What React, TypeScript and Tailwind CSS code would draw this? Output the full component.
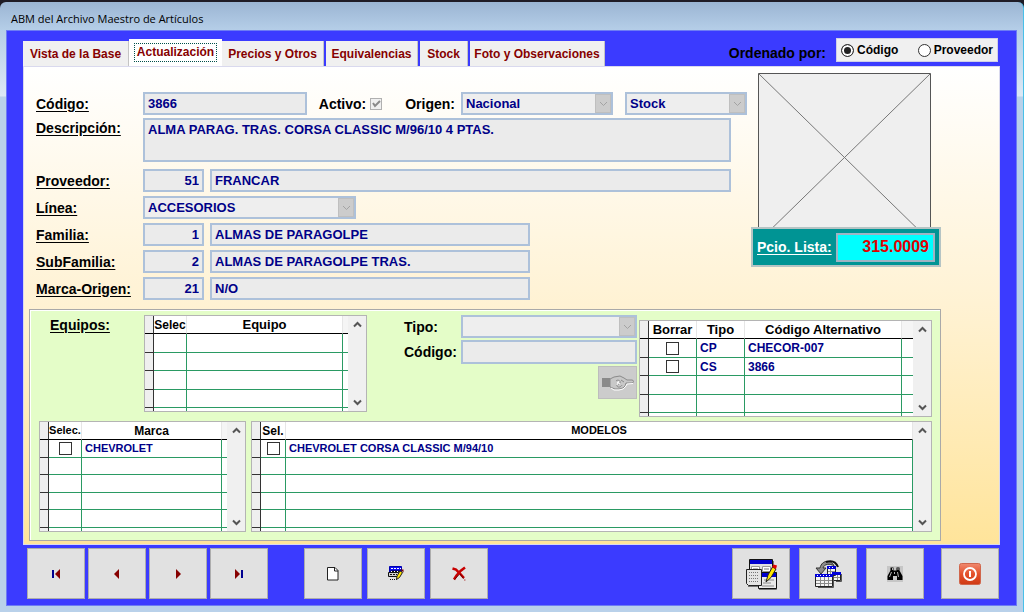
import { useState } from "react";
import type { ReactNode } from "react";

const field =
  "border-2 border-[#adc1da] bg-[#ebebeb] px-[3px] text-[13px] leading-4 font-bold text-[#000088] outline-none";

const tabs = [
  { name: "Vista de la Base", width: "w-[106px]" },
  { name: "Actualización", width: "w-[93px]" },
  { name: "Precios y Otros", width: "w-[102px] mr-[2px]" },
  { name: "Equivalencias", width: "w-[92px] mr-[2px]" },
  { name: "Stock", width: "w-[48px] mr-[2px]" },
  { name: "Foto y Observaciones", width: "w-[135px]" },
];

function Label({ htmlFor, children }: { htmlFor: string; children: ReactNode }) {
  return (
    <label
      htmlFor={htmlFor}
      className="w-[107px] shrink-0 text-sm font-bold underline underline-offset-2"
    >
      {children}
    </label>
  );
}

function Combo({ id, label, value, className }: { id: string; label?: string; value: string; className: string }) {
  return (
    <div className={`flex h-[23px] border-2 border-[#adc1da] bg-[#eeeeee] ${className}`}>
      <select
        id={id}
        aria-label={label}
        disabled
        className="min-w-0 flex-1 appearance-none bg-transparent px-[3px] text-[13px] leading-4 font-bold text-[#000088] opacity-100"
      >
        <option>{value}</option>
      </select>
      <span className="flex w-4 items-center justify-center border border-[#bfbfbf] bg-[#cccccc]">
        <svg width="9" height="6" viewBox="0 0 9 6" fill="none" stroke="#a3a3a3">
          <path d="M1 1l3.5 3.5L8 1" />
        </svg>
      </span>
    </div>
  );
}

function CodeRow({ id, label, code, name, wide }: { id: string; label: string; code: string; name: string; wide?: boolean }) {
  return (
    <div className="flex items-center">
      <Label htmlFor={id}>{label}</Label>
      <input id={id} readOnly defaultValue={code} className={`${field} h-[23px] w-[61px] text-right`} />
      <input
        aria-label={`${label} nombre`}
        readOnly
        defaultValue={name}
        className={`${field} ml-[6px] h-[23px] ${wide ? "mr-4 min-w-0 flex-1" : "w-[320px]"}`}
      />
    </div>
  );
}

type Column = { title: string; width?: string; check?: boolean; head?: string };

function Grid({
  columns,
  rows,
  lines,
  tail,
  small,
  className,
}: {
  columns: Column[];
  rows: string[][];
  lines: number;
  tail?: string;
  small?: boolean;
  className: string;
}) {
  const rowHeight = small ? "h-[18px] even:h-[17px]" : "h-[19px] even:h-[18px]";
  const headText = small ? "text-xs" : "text-[13px]";
  const dataText = small ? "text-[11px]" : "text-xs";
  const blank = Array.from({ length: lines });

  return (
    <div className={`flex items-stretch overflow-hidden border border-[#b4b4b4] bg-white ${className}`}>
      <table className="w-full min-w-0 flex-1 table-fixed border-separate border-spacing-0 leading-none">
        <colgroup>
          <col className="w-[9px]" />
          {columns.map((c) => (
            <col key={c.title} className={c.width} />
          ))}
          {tail && <col className={tail} />}
        </colgroup>
        <thead>
          <tr className="h-[18px]">
            <td className="border-r border-b border-r-[#333] border-b-black bg-[#efefef] p-0" />
            {columns.map((c) => (
              <th
                key={c.title}
                className={`border-r border-b border-r-[#e6e6e6] border-b-black p-0 text-center font-bold whitespace-nowrap ${c.head ?? headText} leading-none`}
              >
                {c.title}
              </th>
            ))}
            {tail && <td className="border-b border-black bg-[#f5f5f5] p-0" />}
          </tr>
        </thead>
        <tbody>
          {blank.map((_, i) => (
            <tr key={i} className={rowHeight}>
              <td className="border-r border-b border-[#333] bg-[#efefef] p-0" />
              {columns.map((c, j) => (
                <td
                  key={c.title}
                  className={`border-r border-b border-[#2a9a63] p-0 font-bold whitespace-nowrap text-[#000088] ${dataText} leading-none`}
                >
                  {rows[i] &&
                    (c.check ? (
                      <input
                        type="checkbox"
                        aria-label={`${c.title} ${rows[i][1]}`}
                        className="mx-auto block size-[13px] appearance-none border border-[#333] bg-white checked:bg-[#333]"
                      />
                    ) : (
                      <span className="pl-[3px]">{rows[i][j]}</span>
                    ))}
                </td>
              ))}
              {tail && <td className="border-b border-[#2a9a63] p-0" />}
            </tr>
          ))}
          <tr aria-hidden="true" className="h-[3px]">
            <td className="border-r border-[#333] bg-[#efefef] p-0" />
            {columns.map((c) => (
              <td key={c.title} className="border-r border-[#2a9a63] p-0" />
            ))}
            {tail && <td className="p-0" />}
          </tr>
        </tbody>
      </table>
      <div className="flex w-[18px] shrink-0 flex-col items-center justify-between bg-[#f0f0f0] py-[5px]">
        <button aria-label="Subir">
          <svg width="9" height="7" viewBox="0 0 9 7" fill="none" stroke="#555" strokeWidth="2">
            <path d="M1 5.5l3.5-3.5L8 5.5" />
          </svg>
        </button>
        <button aria-label="Bajar">
          <svg width="9" height="7" viewBox="0 0 9 7" fill="none" stroke="#555" strokeWidth="2">
            <path d="M1 1.5l3.5 3.5L8 1.5" />
          </svg>
        </button>
      </div>
    </div>
  );
}

function ToolButton({ label, className = "", children }: { label: string; className?: string; children: ReactNode }) {
  return (
    <button
      aria-label={label}
      className={`flex h-[51px] w-[58px] shrink-0 items-center justify-center border border-[#adadad] bg-[#e1e1e1] ${className}`}
    >
      {children}
    </button>
  );
}

function Arrow({ left, bar }: { left?: boolean; bar?: boolean }) {
  return (
    <svg width="10" height="10" viewBox="0 0 10 10" className={left ? "" : "-scale-x-100"}>
      {bar && <path d="M1 1h2v8H1z" fill="#000090" />}
      <path d={bar ? "M9 0v10L4 5z" : "M7 0v10L2 5z"} fill="#860000" />
    </svg>
  );
}

function PageIcon() {
  return (
    <svg width="12" height="14" viewBox="0 0 12 14">
      <path d="M.5.5H8l3 3v9.500H.5z" fill="#fff" stroke="#222" />
      <path d="M7.500.5v3.500H11" fill="none" stroke="#222" />
    </svg>
  );
}

function EditIcon() {
  return (
    <svg width="16" height="16" viewBox="0 0 16 16">
      <path d="M1.500.5h12v6h-12z" fill="#1010f0" stroke="#0000b0" />
      <path d="M3 2.500h10" stroke="#fff" strokeDasharray="2 1" />
      <path d="M2.500 4.500h11v3h-11z" fill="#fff" stroke="#000090" />
      <path d="M.5 6.500h10v4H.5z" fill="#d0d0d0" stroke="#111" />
      <path d="M4 5.500h8M2 8.500h7" stroke="#111" strokeDasharray="2 1" />
      <path d="M2 13.500h7" stroke="#111" strokeDasharray="1 1" />
      <path d="M8.500 13.500l.5-3.500 3-5 2.500 1.500-3 5z" fill="#ffe600" stroke="#222" />
      <path d="M12.500 3.500h3v3z" fill="#7a0000" />
    </svg>
  );
}

function DeleteIcon() {
  return (
    <svg width="16" height="16" viewBox="0 0 16 16" fill="none" stroke="#c80000">
      <path d="M1.500 2.500L5 3.500l4 4 4 4.500" strokeWidth="2.500" />
      <path d="M14 1.500L9.500 5 5.500 9.500 3 13.500" strokeWidth="2.500" />
      <path d="M3.500 13.500L8 8.500M9 8l3.500 4.500" stroke="#6a0000" />
      <path d="M13 14h1.500" stroke="#b04040" />
    </svg>
  );
}

function FormIcon() {
  return (
    <svg width="32" height="32" viewBox="0 0 32 32">
      <path d="M3 28.500h11M14 31.500h17.500V14M28.500 3v9" fill="none" stroke="#777" />
      <path d="M4.500 1.500h23v25h-23z" fill="#e0e0e0" stroke="#111" />
      <path d="M5 2h22v4H5z" fill="#0000d0" />
      <path d="M6.500 8.500h8v5h-8zM17.500 8.500h8v5h-8z" fill="#fff" stroke="#999" />
      <path d="M8 11h5M19 11h5" stroke="#777" />
      <path d="M13.500 14.500h18v16h-18z" fill="#eaeaea" stroke="#111" />
      <path d="M14 15h17v4H14z" fill="#0000d0" />
      <path d="M19 22h10M18 25h8M17 28h12" stroke="#888" />
      <path d="M1.500 11.500h15v16h-13l-2-2z" fill="#e4e4e4" stroke="#222" />
      <path d="M4 14.500h10M4 17.500h10M4 20.500h10M4 23.500h10" stroke="#777" strokeDasharray="1 1" />
      <path d="M21 24l2-7 4.500-8 3.500 2-5 8.500z" fill="#ffe600" stroke="#222" />
      <path d="M27 9l1.500-2.500 3.500 1-1 3.500z" fill="#e00000" />
    </svg>
  );
}

function TablesIcon() {
  return (
    <svg width="28" height="28" viewBox="0 0 28 28">
      <path d="M20 6C18 0 8-1 6 8H2l5 6 5-6H9c1-4 7-5 11-2z" fill="#8c8c8c" stroke="#333" />
      <path d="M12 2c6-2 10 0 12 5" fill="none" stroke="#111" strokeWidth="2" />
      <path d="M13.500 6.500h8v9h-8zM18.500 12.500h8v8h-8z" fill="#f4f4f4" stroke="#222" />
      <path d="M13 6h9v3h-9zM18 12h9v3h-9z" fill="#0000d8" />
      <path d="M14 11.500h7M20 17.500h6M16.500 9v6M23.500 15v5" stroke="#888" />
      <path d="M1.500 14.500h17v12h-17z" fill="#f4f4f4" stroke="#222" />
      <path d="M1 14h18v3H1z" fill="#0000d8" />
      <path d="M2 20.500h16M2 23.500h16M6.500 17v9M10.500 17v9M14.500 17v9" stroke="#888" />
      <path d="M3 15.500h14M15 7.500h6" stroke="#fff" strokeDasharray="1 2" />
      <path d="M4 27.500h15.500V16M22 21.500h5.500V14" fill="none" stroke="#555" />
    </svg>
  );
}

function FindIcon() {
  return (
    <svg width="16" height="16" viewBox="0 0 16 16">
      <path d="M0 0h16v16H0z" fill="#c6c6c6" />
      <path d="M3.500 1.500h3v3h3v-3h3v3L15.500 10v4H10v-4H6v4H.5v-4l3-5.500z" fill="#000" />
      <path d="M5.500 2v2M11 2v2M4.500 6l-2 5M10.500 6l1 5M7.500 6v2" stroke="#ddd" strokeWidth=".8" />
    </svg>
  );
}

function PowerIcon() {
  return (
    <svg width="22" height="22" viewBox="0 0 22 22">
      <defs>
        <linearGradient id="power" x1="0" y1="0" x2="0" y2="1">
          <stop offset="0" stopColor="#f08a70" />
          <stop offset=".5" stopColor="#e4512c" />
          <stop offset="1" stopColor="#cf3a14" />
        </linearGradient>
      </defs>
      <rect x=".5" y=".5" width="21" height="21" rx="2" fill="url(#power)" stroke="#d0664c" />
      <circle cx="11" cy="11" r="6" fill="none" stroke="#fff" strokeWidth="1.800" />
      <path d="M11 8v6" stroke="#fff" strokeWidth="2" />
    </svg>
  );
}

function HandIcon() {
  return (
    <svg width="32" height="16" viewBox="0 0 32 16">
      <path d="M0 3h8v9H0z" fill="#8a8a8a" />
      <path
        d="M8 4l4-2 6-1 4 2 3 2h5c2 0 2 3 0 3l-6 0-1 3-2 2-4 1h-4l-5-2z"
        fill="#c8c8c8"
        stroke="#8a8a8a"
      />
      <path d="M9 13l3 2h5l4-1 3-3 1-2 6-.500" fill="none" stroke="#fff" />
      <path d="M14 6c2-2 5 0 4 2s-4 1-3 3 4 1 5-1M19 5l3 2" fill="none" stroke="#8a8a8a" />
      <path d="M15 7l3 2M17 6l-2 4" stroke="#fff" />
    </svg>
  );
}

export default function App() {
  const [order, setOrder] = useState("Código");

  return (
    <div className="flex min-h-screen flex-col bg-[#1f1c26] pt-[2px] font-['Liberation_Sans',Arial,sans-serif] text-black">
      <div className="flex flex-1 flex-col rounded-t-md border-r border-[#49c0e8] bg-[linear-gradient(to_bottom,#9bb5d3_0,#b5cee8_28px,#dce8f5_94px,#b9d1ea_95px)] px-[6px] pb-[6px]">

        {/* TITLE BAR */}

        <header className="flex h-7 items-center px-[5px] pt-[6px]">
          <h1 className="font-['Open_Sans','Noto_Sans',sans-serif] text-[11px] text-black">
            ABM del Archivo Maestro de Artículos
          </h1>
        </header>

        <main className="flex flex-1 flex-col border border-[#6d7cf4] bg-[#3b3bff] px-4 pt-[6px] pb-[6px]">

          {/* TABS */}

          <div className="flex items-end justify-between">
            <div role="tablist" className="flex items-end">
              {tabs.map((tab) => (
                <button
                  key={tab.name}
                  role="tab"
                  aria-selected={tab.name === "Actualización"}
                  className={`flex items-center justify-center text-xs font-bold whitespace-nowrap text-[#860000] ${tab.width} ${
                    tab.name === "Actualización"
                      ? "h-[27px] bg-white"
                      : "h-[25px] border-r border-[#c4c4c4] bg-[#f0f0f0]"
                  }`}
                >
                  {tab.name === "Actualización" ? (
                    <span className="border border-dotted border-[#00504a] px-[2px] pb-[1px]">
                      {tab.name}
                    </span>
                  ) : (
                    tab.name
                  )}
                </button>
              ))}
            </div>

            <div className="flex items-center pr-[2px] pb-[3px]">
              <span id="order-label" className="mr-[10px] pt-[6px] text-sm font-bold">
                Ordenado por:
              </span>
              <div
                role="radiogroup"
                aria-labelledby="order-label"
                className="flex h-6 w-[162px] items-center justify-between border border-[#cfcfe8] bg-[#f0f0f0] px-1"
              >
                {["Código", "Proveedor"].map((name) => (
                  <label key={name} className="flex items-center gap-[3px] text-xs font-bold">
                    <input
                      type="radio"
                      name="order"
                      checked={order === name}
                      onChange={() => setOrder(name)}
                      className="size-[13px] appearance-none rounded-full border border-[#333] bg-white checked:bg-[#222] checked:shadow-[inset_0_0_0_2px_#fff]"
                    />
                    {name}
                  </label>
                ))}
              </div>
            </div>
          </div>

          {/* PAGE */}

          <section className="border border-[#d9d9ee] bg-linear-to-b from-white via-[#fff2d3] to-[#ffe49a] pb-[3px]">
            <div className="flex">

              <div className="min-w-0 flex-1 pt-[25px] pl-3">
                <div className="flex items-center">
                  <Label htmlFor="codigo">Código:</Label>
                  <input id="codigo" readOnly defaultValue="3866" className={`${field} h-[23px] w-0 min-w-16 flex-1`} />
                  <label htmlFor="activo" className="ml-3 text-sm font-bold">
                    Activo:
                  </label>
                  <span className="mr-[23px] ml-1 grid">
                    <input
                      id="activo"
                      type="checkbox"
                      defaultChecked
                      disabled
                      className="size-3 appearance-none border border-[#b0b0b0] bg-[#f0f0f0] [grid-area:1/1]"
                    />
                    <svg width="12" height="12" viewBox="0 0 12 12" className="[grid-area:1/1]" fill="none" stroke="#8a8a8a" strokeWidth="2">
                      <path d="M3 5l2 3 5-5" />
                    </svg>
                  </span>
                  <label htmlFor="origen" className="mr-[6px] text-sm font-bold">
                    Origen:
                  </label>
                  <Combo id="origen" value="Nacional" className="w-[152px]" />
                  <Combo id="deposito" label="Depósito" value="Stock" className="ml-3 w-[122px]" />
                </div>

                <div className="mt-[3px] mr-4 flex">
                  <Label htmlFor="descripcion">Descripción:</Label>
                  <textarea
                    id="descripcion"
                    readOnly
                    defaultValue="ALMA PARAG. TRAS. CORSA CLASSIC M/96/10 4 PTAS."
                    className={`${field} h-11 min-w-0 flex-1 resize-none pt-[2px]`}
                  />
                </div>

                <div className="mt-[7px] flex flex-col gap-1">
                  <CodeRow id="proveedor" label="Proveedor:" code="51" name="FRANCAR" wide />
                  <div className="flex items-center">
                    <Label htmlFor="linea">Línea:</Label>
                    <Combo id="linea" value="ACCESORIOS" className="w-[213px]" />
                  </div>
                  <CodeRow id="familia" label="Familia:" code="1" name="ALMAS DE PARAGOLPE" />
                  <CodeRow id="subfamilia" label="SubFamilia:" code="2" name="ALMAS DE PARAGOLPE TRAS." />
                  <CodeRow id="marca" label="Marca-Origen:" code="21" name="N/O" />
                </div>
              </div>

              {/* PHOTO AND PRICE */}

              <aside className="ml-1 w-[248px] shrink-0 pt-[6px]">
                <svg width="173" height="154" viewBox="0 0 173 154" className="ml-[7px]" fill="none" stroke="#777">
                  <path d="M.5 160V.5h172V160" fill="#efefef" stroke="#555" />
                  <path d="M.5.5l172 168M172.500.5L.5 168.500" />
                </svg>
                <div className="flex h-10 w-[190px] items-center border-2 border-[#b5c4c4] bg-[#009494] px-1">
                  <label htmlFor="precio" className="text-sm font-bold whitespace-nowrap text-white underline underline-offset-2">
                    Pcio. Lista:
                  </label>
                  <input
                    id="precio"
                    readOnly
                    defaultValue="315.0009"
                    className="ml-1 h-[29px] w-0 flex-1 border-2 border-[#9fb4c4] bg-[#00ffff] px-1 text-right text-base font-bold text-[#e00000] outline-none"
                  />
                </div>
              </aside>
            </div>

            {/* DETAIL GRIDS */}

            <div className="mt-[9px] mr-[58px] ml-[5px] border border-[#a9a9a9] bg-[#e4fdc8] pr-2 pb-2 pl-[9px] shadow-[inset_1px_1px_0_#fff]">
              <div className="flex pt-[5px]">
                <h2 className="ml-[11px] w-[94px] text-sm font-bold underline underline-offset-2">
                  Equipos:
                </h2>
                <Grid
                  className="w-[223px] self-start"
                  columns={[
                    { title: "Selec", width: "w-[33px]", check: true, head: "text-xs" },
                    { title: "Equipo" },
                  ]}
                  rows={[]}
                  lines={4}
                  tail="w-[5px]"
                />
                <div className="ml-[37px] flex flex-col gap-[2px] text-sm font-bold">
                  <div className="flex items-center">
                    <label htmlFor="tipo" className="w-[57px]">Tipo:</label>
                    <Combo id="tipo" value="" className="w-[176px]" />
                  </div>
                  <div className="flex items-center">
                    <label htmlFor="alternativo" className="w-[57px]">Código:</label>
                    <input id="alternativo" readOnly className={`${field} h-6 w-[176px]`} />
                  </div>
                  <button
                    disabled
                    aria-label="Agregar código"
                    className="flex h-[33px] w-[39px] items-center justify-center self-end border border-[#bdbdbd] bg-[#cccccc]"
                  >
                    <HandIcon />
                  </button>
                </div>
                <Grid
                  className="mt-[5px] ml-[2px] min-w-0 flex-1"
                  columns={[
                    { title: "Borrar", width: "w-[48px]", check: true },
                    { title: "Tipo", width: "w-[48px]" },
                    { title: "Código Alternativo" },
                  ]}
                  rows={[
                    ["", "CP", "CHECOR-007"],
                    ["", "CS", "3866"],
                  ]}
                  lines={4}
                  tail="w-[11px]"
                />
              </div>

              <div className="mt-1 flex gap-[5px]">
                <Grid
                  small
                  className="w-[207px]"
                  columns={[
                    { title: "Selec.", width: "w-[33px]", check: true, head: "text-[11px]" },
                    { title: "Marca" },
                  ]}
                  rows={[["", "CHEVROLET"]]}
                  lines={5}
                  tail="w-[5px]"
                />
                <Grid
                  small
                  className="min-w-0 flex-1"
                  columns={[{ title: "Sel.", width: "w-[25px]", check: true }, { title: "MODELOS", head: "text-[11px]" }]}
                  rows={[["", "CHEVROLET CORSA CLASSIC M/94/10"]]}
                  lines={5}
                />
              </div>
            </div>
          </section>

          {/* TOOLBAR */}

          <nav className="flex pt-[3px] pr-px pl-1">
            <div className="flex gap-[3px]">
              <ToolButton label="Primero"><Arrow left bar /></ToolButton>
              <ToolButton label="Anterior"><Arrow left /></ToolButton>
              <ToolButton label="Siguiente"><Arrow /></ToolButton>
              <ToolButton label="Último"><Arrow bar /></ToolButton>
            </div>
            <div className="ml-9 flex gap-[5px]">
              <ToolButton label="Nuevo"><PageIcon /></ToolButton>
              <ToolButton label="Modificar"><EditIcon /></ToolButton>
              <ToolButton label="Eliminar"><DeleteIcon /></ToolButton>
            </div>
            <div className="ml-auto flex gap-[9px]">
              <ToolButton label="Formulario"><FormIcon /></ToolButton>
              <ToolButton label="Tablas"><TablesIcon /></ToolButton>
              <ToolButton label="Buscar"><FindIcon /></ToolButton>
              <ToolButton label="Salir" className="ml-2"><PowerIcon /></ToolButton>
            </div>
          </nav>
        </main>
      </div>
    </div>
  );
}
